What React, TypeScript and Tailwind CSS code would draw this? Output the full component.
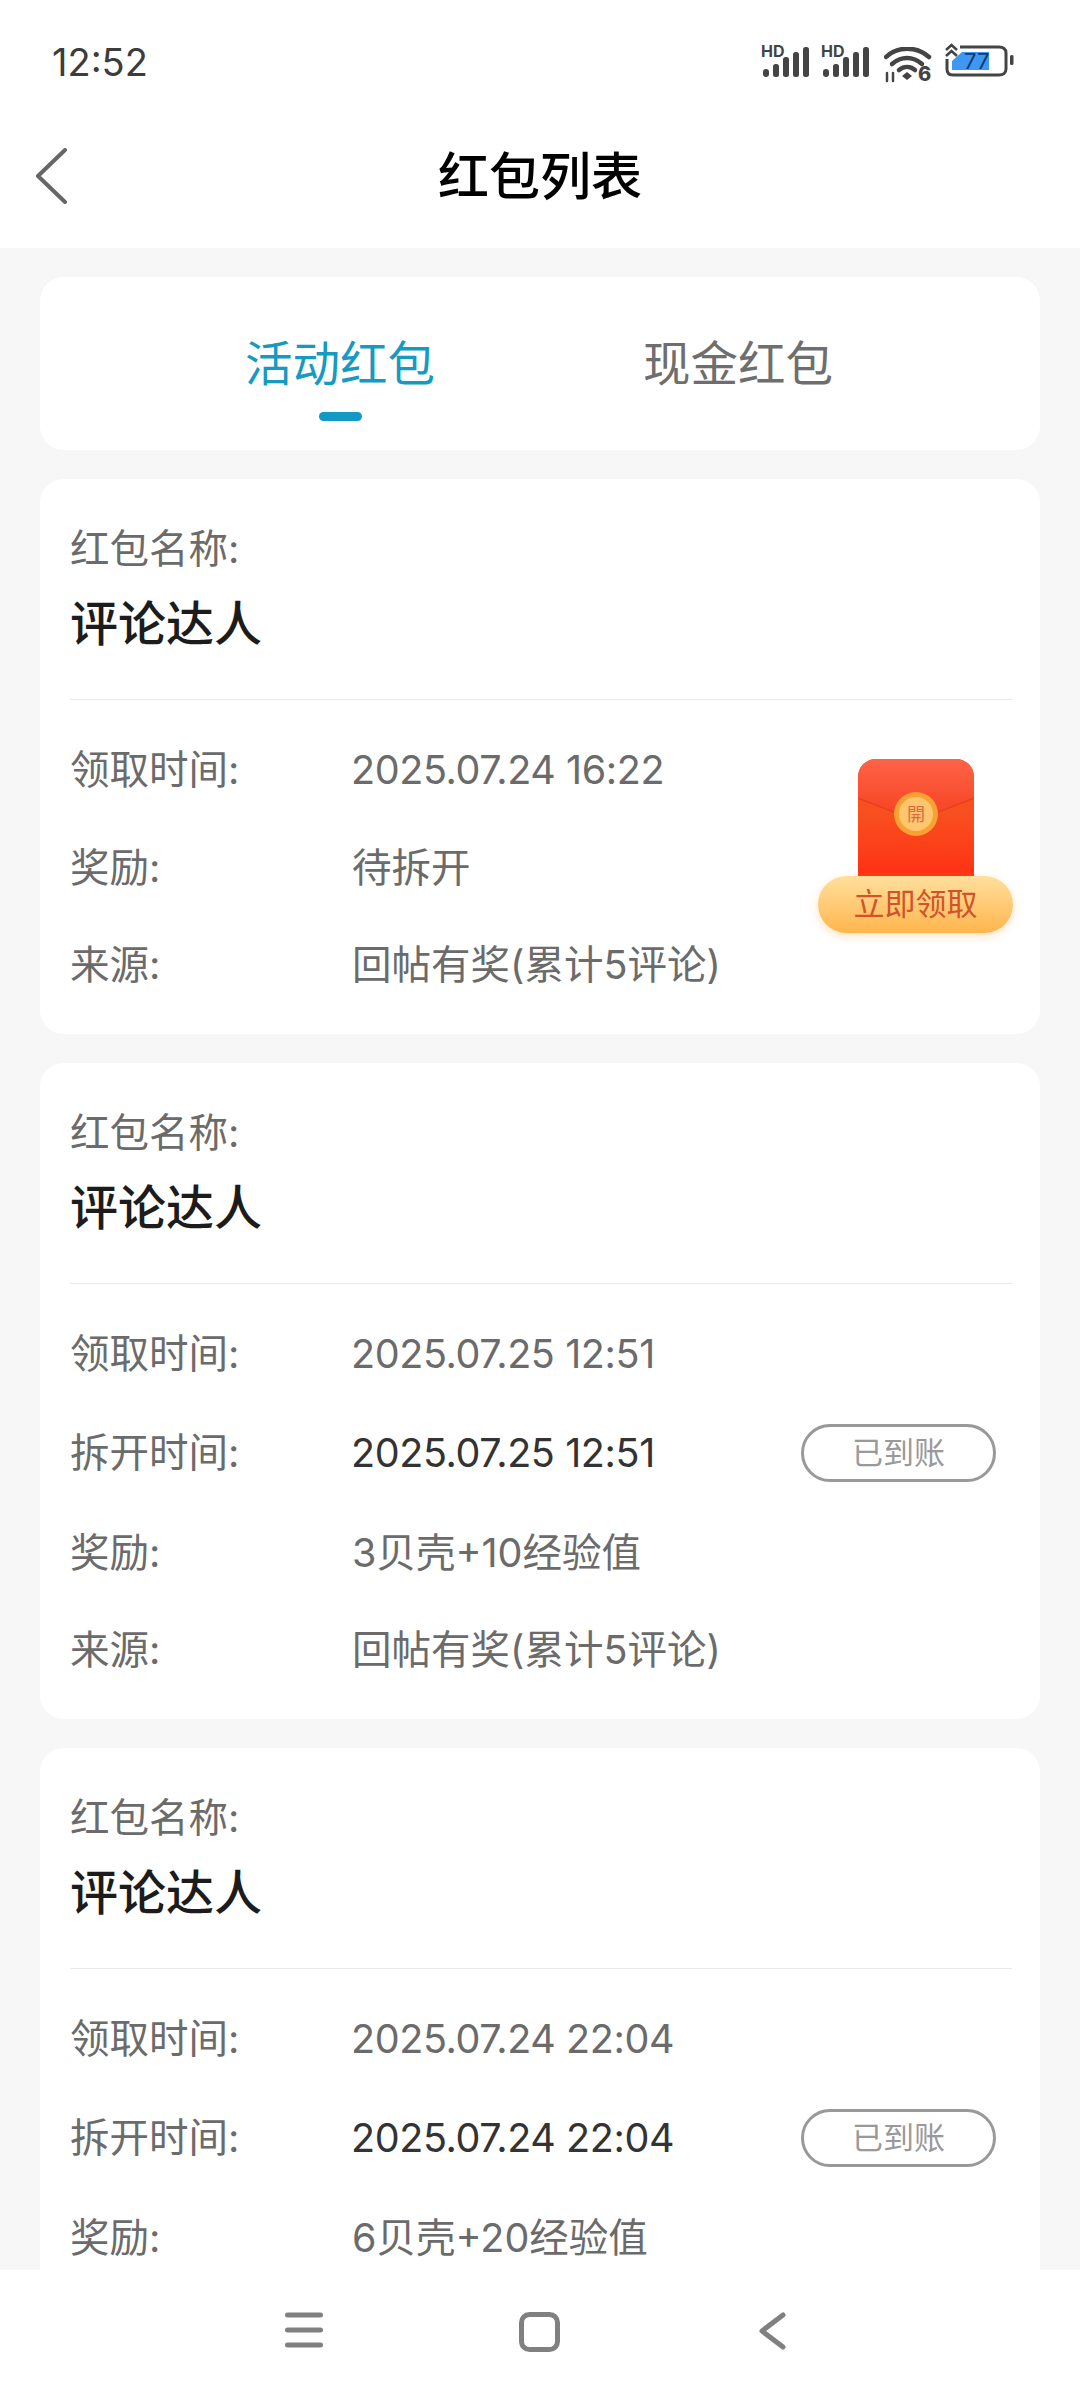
const FONT = "font-['Inter','Noto_Sans_CJK_SC',sans-serif]";

const SignalIcon = () => (
    <svg width="49" height="38" viewBox="0 -6 49 38" className="mt-[-4px] text-[#444]">
        <text x="0" y="12" fontSize="16" fontWeight="700" fontFamily="Inter, sans-serif" fill="currentColor">HD</text>
        <rect x="2" y="24" width="6" height="8" rx="3" fill="currentColor" />
        <rect x="12" y="19" width="6" height="13" rx="2.500" fill="currentColor" />
        <rect x="22" y="12" width="6" height="20" rx="2.500" fill="currentColor" />
        <rect x="32" y="7" width="6" height="25" rx="2.500" fill="currentColor" />
        <rect x="42" y="2" width="6" height="30" rx="2.500" fill="currentColor" />
    </svg>
);

const WifiIcon = () => (
    <svg width="48" height="42" viewBox="0 0 48 42" fill="none" stroke="#444" strokeWidth="4.500" strokeLinecap="round" className="ml-[3px] mt-[4px]">
        <path d="M2 10C13 -1 33 -1 45 10" />
        <path d="M8 17C17 9 29 9 38 17" />
        <path d="M15 23C20 19 26 19 31 23" />
        <path d="M18 29L23 25L28 29L23 33Z" fill="#444" stroke="none" />
        <path d="M3 26V34M9 34V26" strokeWidth="2.500" />
        <text x="34" y="34" fontSize="20" fontWeight="800" fontFamily="Inter, sans-serif" fill="#444" stroke="none">6</text>
    </svg>
);

const BatteryIcon = () => (
    <svg width="70" height="40" viewBox="0 0 70 40" fill="none" className="ml-[2px]">
        <path d="M1 7L6.500 2L12 7M1 13L6.500 8L12 13" stroke="#444" strokeWidth="2.500" />
        <path d="M2 16V26C2 30 4 32 8 32H54C58 32 61 30 61 26V10C61 6 58 4 54 4H15" stroke="#444" strokeWidth="3" />
        <path d="M7 27V18L17 9H44V27Z" fill="#3f97f5" />
        <rect x="65" y="12" width="3.500" height="10" rx="1.500" fill="#444" />
        <text x="19" y="26" fontSize="22" fontFamily="Inter, sans-serif" fill="#123a6b">77</text>
    </svg>
);

const RedPacket = () => (
    <div className="flex w-[195px] flex-col items-center">
        <svg width="116" height="117" viewBox="0 0 116 117" className="block">
            <defs>
                <linearGradient id="bodyRed" x1="0" y1="0" x2="0" y2="1">
                    <stop offset="0" stopColor="#f44c22" />
                    <stop offset="0.45" stopColor="#f85020" />
                    <stop offset="1" stopColor="#ff3114" />
                </linearGradient>
                <linearGradient id="flapRed" x1="0" y1="0" x2="0" y2="1">
                    <stop offset="0" stopColor="#ff6347" />
                    <stop offset="1" stopColor="#f5401f" />
                </linearGradient>
            </defs>
            <path d="M0 117V18C0 8 8 0 18 0H98C108 0 116 8 116 18V117Z" fill="url(#bodyRed)" />
            <path d="M0 18C0 8 8 0 18 0H98C108 0 116 8 116 18V39L58 62L0 39Z" fill="url(#flapRed)" />
            <path d="M0 39L58 62L116 39" fill="none" stroke="#e8401d" strokeWidth="1.500" />
            <circle cx="58" cy="55" r="22" fill="#f9a233" />
            <circle cx="58" cy="55" r="17" fill="#ffc670" />
            <text x="58" y="62" fontSize="18" textAnchor="middle" fontFamily="'Noto Sans CJK TC', sans-serif" fill="#dc6a40">開</text>
        </svg>
        <div className="flex h-[57px] w-[195px] items-center justify-center rounded-full bg-gradient-to-b from-[#ffe09c] to-[#ffb54a] text-[31px] text-[#d2522a] shadow-[0_3px_8px_rgba(255,170,80,0.35)]">
            立即领取
        </div>
    </div>
);

interface RowData {
    label: string;
    value: string;
    date?: boolean;
    badge?: boolean;
}

const InfoRow = ({ label, value, date, badge }: RowData) => (
    <div className={`flex items-center ${badge ? "h-[101px]" : "h-[97.500px]"}`}>
        <span className="w-[282px] shrink-0 pt-[2px] text-[#6b6b6b]">{label}</span>
        <span className={`pt-[2px] ${date ? "-ml-px tracking-[-0.4px]" : ""} ${badge ? "text-[#333]" : "text-[#6b6b6b]"}`}>{value}</span>
        {badge && (
            <span className="ml-auto mr-[16px] flex h-[58px] w-[195px] items-center justify-center rounded-full border-[3px] border-[#999] text-[31px] text-[#999]">
                已到账
            </span>
        )}
    </div>
);

const PacketCard = ({ rows, claimable }: { rows: RowData[]; claimable?: boolean }) => (
    <div className="relative shrink-0 rounded-[24px] bg-white pb-[20.500px] pl-[30px] pr-[28px] pt-[41px] text-[39.500px]">
        <div className="flex h-[60px] items-center text-[#6b6b6b]">红包名称:</div>
        <div className="mt-[14px] flex h-[60px] items-center text-[48px] font-medium text-[#1c1c1c]">评论达人</div>
        <div className="mt-[45px] h-px bg-[#e9e9e9]" />
        <div className="mt-[21px]">
            {rows.map((row) => (
                <InfoRow key={row.label} {...row} />
            ))}
        </div>
        {claimable && (
            <div className="absolute right-[27px] top-[280px]">
                <RedPacket />
            </div>
        )}
    </div>
);

export default function App() {
    return (
        <div className={`flex h-[2400px] w-[1080px] flex-col overflow-hidden bg-[#f7f7f7] ${FONT}`}>
            {/* Status bar + title */}
            <div className="h-[248px] shrink-0 bg-white">
                <div className="flex h-[104px] items-start justify-between pl-[52px] pr-[65px] pt-[43px]">
                    <span className="text-[38px] leading-[38px] text-[#3c3c3c]">12:52</span>
                    <div className="flex items-start gap-[11px]">
                        <SignalIcon />
                        <SignalIcon />
                        <WifiIcon />
                        <BatteryIcon />
                    </div>
                </div>
                <div className="relative flex h-[144px] items-center justify-center">
                    <svg width="34" height="56" viewBox="0 0 34 56" fill="none" className="absolute left-[34px] top-[44px]">
                        <path d="M31 2L4 28L31 54" stroke="#666" strokeWidth="4" strokeLinecap="round" strokeLinejoin="round" />
                    </svg>
                    <span className="pt-[2px] text-[51px] font-medium text-black">红包列表</span>
                </div>
            </div>

            {/* List */}
            <div className="flex min-h-0 flex-1 flex-col gap-[29px] overflow-hidden px-[40px] pt-[29px]">
                <div className="relative flex h-[173px] shrink-0 rounded-[24px] bg-white text-[47.500px]">
                    <div className="relative ml-[204px] mt-[61px] w-[192px] text-center leading-[52px] text-[#169ac2]">
                        活动红包
                        <div className="absolute left-[75px] top-[74px] h-[9px] w-[43px] rounded-full bg-[#129ac4]" />
                    </div>
                    <div className="ml-[206px] mt-[61px] w-[192px] text-center leading-[52px] text-[#6e6e6e]">现金红包</div>
                </div>

                <PacketCard
                    claimable
                    rows={[
                        { label: "领取时间:", value: "2025.07.24 16:22", date: true },
                        { label: "奖励:", value: "待拆开" },
                        { label: "来源:", value: "回帖有奖(累计5评论)" },
                    ]}
                />
                <PacketCard
                    rows={[
                        { label: "领取时间:", value: "2025.07.25 12:51", date: true },
                        { label: "拆开时间:", value: "2025.07.25 12:51", date: true, badge: true },
                        { label: "奖励:", value: "3贝壳+10经验值" },
                        { label: "来源:", value: "回帖有奖(累计5评论)" },
                    ]}
                />
                {/* last row of this card sits under the nav bar in the screenshot */}
                <PacketCard
                    rows={[
                        { label: "领取时间:", value: "2025.07.24 22:04", date: true },
                        { label: "拆开时间:", value: "2025.07.24 22:04", date: true, badge: true },
                        { label: "奖励:", value: "6贝壳+20经验值" },
                    ]}
                />
            </div>

            {/* Navigation bar */}
            <div className="relative flex h-[130px] shrink-0 items-start bg-white pl-[285px] pt-[42px]">
                <svg width="38" height="36" viewBox="0 0 38 36" fill="none" stroke="#808080" strokeWidth="5" strokeLinecap="round">
                    <path d="M2.500 3H35.500M2.500 18H35.500M2.500 33H35.500" />
                </svg>
                <svg width="41" height="40" viewBox="0 0 41 40" fill="none" stroke="#808080" strokeWidth="5" className="ml-[196px]">
                    <rect x="2.500" y="2.500" width="36" height="35" rx="8" />
                </svg>
                <svg width="28" height="38" viewBox="0 0 28 38" fill="none" stroke="#808080" strokeWidth="5" strokeLinecap="round" strokeLinejoin="round" className="ml-[198px]">
                    <path d="M25 3L4 19L25 35" />
                </svg>
            </div>
        </div>
    );
}
